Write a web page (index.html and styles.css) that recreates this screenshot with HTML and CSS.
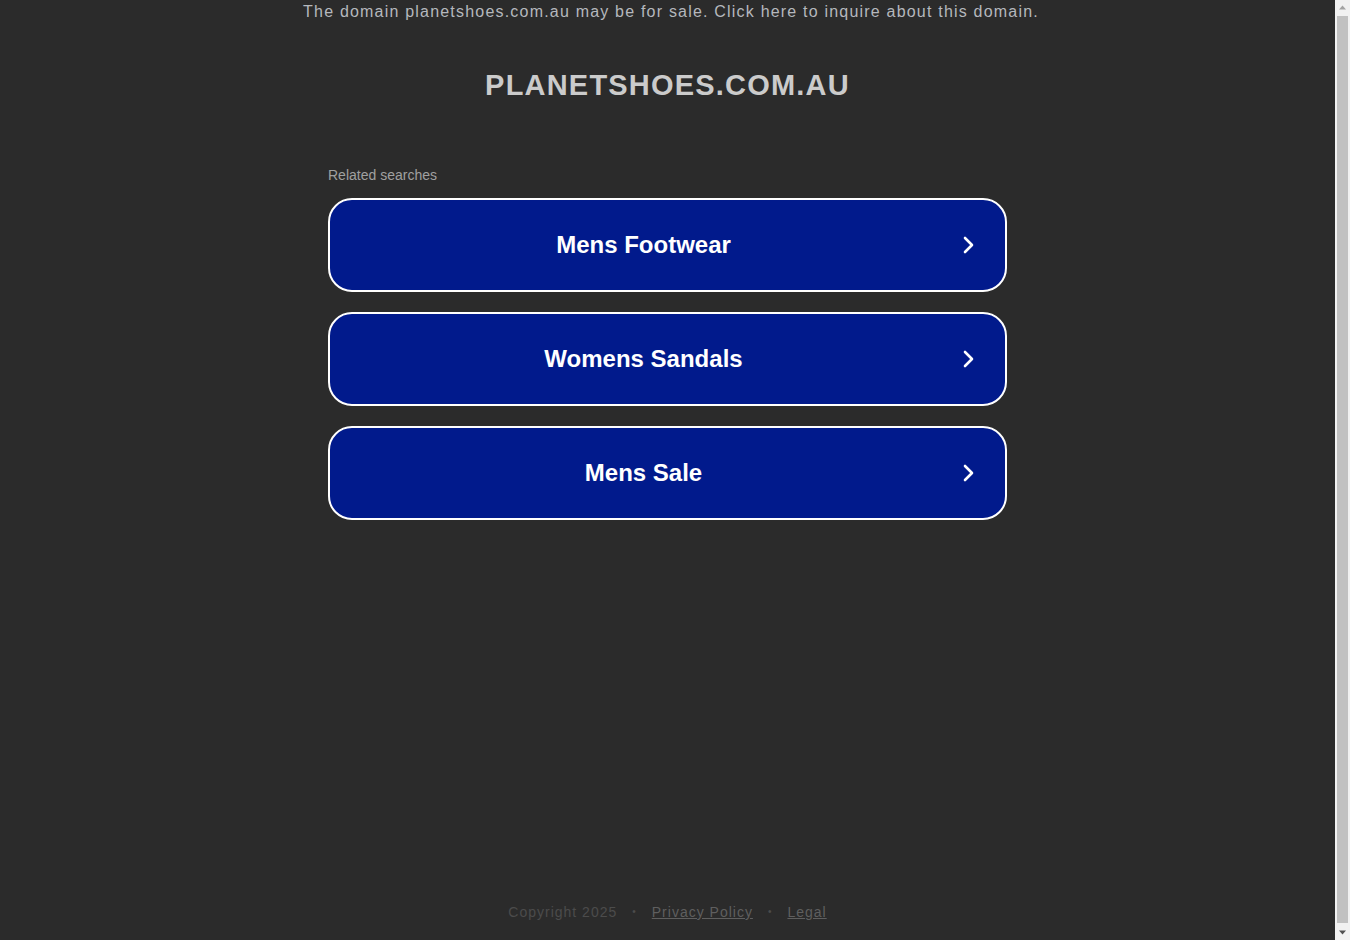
FILE: index.html
```html
<!DOCTYPE html>
<html lang="en">
<head>
<meta charset="utf-8">
<title>planetshoes.com.au</title>
<link rel="stylesheet" href="styles.css">
</head>
<body>
<div class="page">
  <div class="banner"><a href="#">The domain planetshoes.com.au may be for sale. Click here to inquire about this domain.</a></div>
  <h1 class="title">PLANETSHOES.COM.AU</h1>
  <div class="content">
    <div class="related">Related searches</div>
    <a class="btn" href="#"><span class="label">Mens Footwear</span><svg class="arrow" viewBox="0 0 24 24" width="24" height="24"><path d="M9 5l7 7-7 7" fill="none" stroke="#fff" stroke-width="2.6" stroke-linecap="round" stroke-linejoin="round"/></svg></a>
    <a class="btn" href="#"><span class="label">Womens Sandals</span><svg class="arrow" viewBox="0 0 24 24" width="24" height="24"><path d="M9 5l7 7-7 7" fill="none" stroke="#fff" stroke-width="2.6" stroke-linecap="round" stroke-linejoin="round"/></svg></a>
    <a class="btn" href="#"><span class="label">Mens Sale</span><svg class="arrow" viewBox="0 0 24 24" width="24" height="24"><path d="M9 5l7 7-7 7" fill="none" stroke="#fff" stroke-width="2.6" stroke-linecap="round" stroke-linejoin="round"/></svg></a>
  </div>
  <div class="spacer"></div>
  <footer class="footer">
    <span>Copyright 2025</span><span class="dot">•</span><a href="#">Privacy Policy</a><span class="dot">•</span><a href="#">Legal</a>
  </footer>
</div>
<div class="scrollbar" aria-hidden="true">
  <svg class="sb-arrow" viewBox="0 0 15 15" width="15" height="15"><path d="M4 9.5h7L7.5 5.5z" fill="#a3a3a3"/></svg>
  <div class="sb-track"><div class="sb-thumb"></div></div>
  <svg class="sb-arrow" viewBox="0 0 15 15" width="15" height="15"><path d="M4 5.5h7L7.5 9.5z" fill="#505050"/></svg>
</div>
</body>
</html>
```
FILE: styles.css
```css
html, body {
  margin: 0;
  padding: 0;
  background: #2b2b2b;
}
body {
  font-family: "Liberation Sans", Arial, sans-serif;
}
.page {
  width: calc(100% - 15px);
  min-height: 940px;
  display: flex;
  flex-direction: column;
  align-items: center;
}
.banner {
  height: 24px;
  line-height: 24px;
  font-size: 16px;
  letter-spacing: 1.2px;
  text-align: center;
  padding-left: 7px;
}
.banner a {
  color: #b5b8bd;
  text-decoration: none;
}
.title {
  margin: 44px 0 0;
  font-size: 29px;
  line-height: 34px;
  font-weight: bold;
  letter-spacing: 1.2px;
  color: #cbcbcb;
}
.content {
  width: 679px;
  margin-top: 65px;
}
.related {
  font-size: 14px;
  color: #a0a0a0;
  line-height: 16px;
  margin-bottom: 15px;
}
.btn {
  box-sizing: border-box;
  height: 94px;
  margin-bottom: 20px;
  border: 2px solid #fff;
  border-radius: 24px;
  background: #011a8c;
  display: flex;
  align-items: center;
  justify-content: center;
  position: relative;
  text-decoration: none;
}
.label {
  color: #fff;
  font-size: 24px;
  font-weight: bold;
  margin-right: 48px;
}
.arrow {
  position: absolute;
  right: 25px;
  top: 33px;
}
.spacer {
  flex: 1;
}
.footer {
  font-size: 14px;
  letter-spacing: 1px;
  color: #4c4c4c;
  height: 30px;
  display: flex;
  gap: 15px;
  align-items: flex-start;
  margin-bottom: 6px;
}
.footer a {
  color: #5f5f5f;
}
.dot {
  font-size: 10px;
  line-height: 16px;
}
.scrollbar {
  position: fixed;
  top: 0;
  right: 0;
  width: 15px;
  height: 100%;
  background: #f1f1f1;
  display: flex;
  flex-direction: column;
}
.sb-arrow {
  flex: none;
  display: block;
}
.sb-track {
  flex: 1;
  padding: 1px 2px 2px;
  display: flex;
}
.sb-thumb {
  flex: 1;
  background: #c1c1c1;
}
```
